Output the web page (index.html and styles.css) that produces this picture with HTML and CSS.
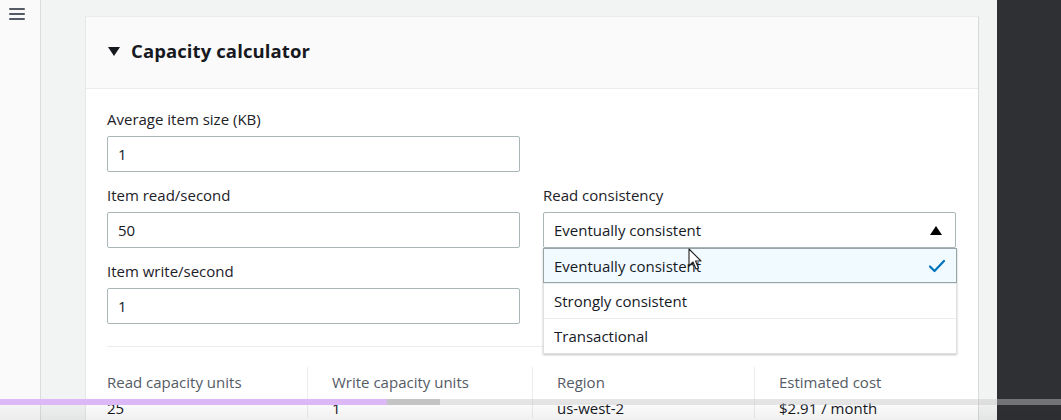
FILE: index.html
```html
<!DOCTYPE html>
<html>
<head>
<meta charset="utf-8">
<link rel="stylesheet" href="styles.css">
</head>
<body>
<div class="app">
  <aside class="sidebar">
    <svg class="burger" width="16" height="14" viewBox="0 0 16 14"><rect x="0" y="1" width="16" height="2" rx="1"/><rect x="0" y="6" width="16" height="2" rx="1"/><rect x="0" y="11" width="16" height="2" rx="1"/></svg>
  </aside>
  <main class="main">
    <section class="card">
      <header class="card-head">
        <span class="caret-down"></span>
        <h2 class="title">Capacity calculator</h2>
      </header>
      <div class="card-body">
        <div class="form">
          <div class="field f-size">
            <label class="label">Average item size (KB)</label>
            <div class="input">1</div>
          </div>
          <div class="field f-read">
            <label class="label">Item read/second</label>
            <div class="input">50</div>
          </div>
          <div class="field f-cons">
            <label class="label">Read consistency</label>
            <div class="select-wrap">
              <div class="input select">
                <span>Eventually consistent</span>
                <span class="caret-up"></span>
              </div>
              <ul class="menu">
                <li class="opt selected"><span>Eventually consistent</span>
                  <svg class="check" width="18" height="14" viewBox="0 0 18 14"><path d="M2 7.5 L6.5 12 L16 2" fill="none" stroke="#0073bb" stroke-width="2.2" stroke-linecap="round" stroke-linejoin="round"/></svg>
                </li>
                <li class="opt">Strongly consistent</li>
                <li class="opt">Transactional</li>
              </ul>
              <svg class="cursor" width="16" height="24" viewBox="0 0 16 24"><path d="M1 1 L1 18 L5 14 L8 21 L10.5 20 L7.5 13 L13 13 Z" fill="#fff" stroke="#222" stroke-width="1.1" stroke-linejoin="round"/></svg>
            </div>
          </div>
          <div class="field f-write">
            <label class="label">Item write/second</label>
            <div class="input">1</div>
          </div>
        </div>
        <div class="divider"></div>
        <div class="stats">
          <div class="stat"><div class="s-label">Read capacity units</div><div class="s-value">25</div></div>
          <div class="stat bordered"><div class="s-label">Write capacity units</div><div class="s-value">1</div></div>
          <div class="stat bordered"><div class="s-label">Region</div><div class="s-value">us-west-2</div></div>
          <div class="stat bordered"><div class="s-label">Estimated cost</div><div class="s-value">$2.91 / month</div></div>
        </div>
      </div>
    </section>
  </main>
  <div class="dark"></div>
</div>
<div class="video-shade"></div>
<div class="progress">
  <div class="played"></div>
  <div class="buffered"></div>
</div>
</body>
</html>
```

FILE: styles.css
```css
* { box-sizing: border-box; }
html, body { margin: 0; padding: 0; }
body {
  width: 1061px;
  height: 420px;
  overflow: hidden;
  font-family: "Open Sans", "Noto Sans", "Liberation Sans", sans-serif;
  color: #16191f;
  background: #f2f3f3;
  position: relative;
}
.app {
  display: flex;
  height: 420px;
}
.sidebar {
  width: 41px;
  flex: none;
  background: #fafafa;
  border-right: 1px solid #dcdcdc;
  padding: 7px 0 0 9px;
}
.burger { display: block; fill: #545b64; }
.main {
  flex: 1;
  background: #f2f3f3;
  padding: 16px 19px 0 44px;
  min-width: 0;
}
.dark {
  width: 64px;
  flex: none;
  background: #2f3033;
}
.card {
  width: 894px;
  height: 420px;
  background: #fff;
  border-left: 1px solid #e6e6e6;
  border-right: 1px solid #d9d9d9;
  border-top: 1px solid #ececec;
}
.card-head {
  height: 72px;
  background: #fafafa;
  border-bottom: 1px solid #eaeded;
  display: flex;
  align-items: center;
  padding-left: 22px;
  padding-bottom: 4px;
  gap: 11px;
}
.caret-down {
  width: 0; height: 0;
  border-left: 6px solid transparent;
  border-right: 6px solid transparent;
  border-top: 9px solid #16191f;
  margin-top: 1px;
}
.title {
  margin: 0;
  font-size: 18.5px;
  font-weight: 700;
  letter-spacing: 0.1px;
  color: #16191f;
}
.card-body {
  padding: 20px 22px 0 21px;
}
.form {
  display: grid;
  grid-template-columns: 413px 413px;
  column-gap: 23px;
  row-gap: 13px;
  grid-template-areas:
    "size ."
    "read cons"
    "write .";
}
.f-size { grid-area: size; }
.f-read { grid-area: read; }
.f-cons { grid-area: cons; }
.f-write { grid-area: write; }
.field { display: flex; flex-direction: column; gap: 7px; }
.label {
  font-size: 15px;
  line-height: 20px;
  color: #1d2128;
}
.input {
  height: 36px;
  border: 1px solid #aab7b8;
  border-radius: 2px;
  padding: 0 10px;
  display: flex;
  align-items: center;
  font-size: 15px;
  color: #16191f;
  background: #fff;
}
.select-wrap { position: relative; }
.select { justify-content: space-between; padding-right: 13px; }
.caret-up {
  width: 0; height: 0;
  border-left: 6px solid transparent;
  border-right: 6px solid transparent;
  border-bottom: 9px solid #000;
}
.menu {
  position: absolute;
  left: 0;
  top: 36px;
  width: 414px;
  margin: 0;
  padding: 0;
  list-style: none;
  background: #fff;
  border: 1px solid #e0e0e0;
  border-top: none;
  box-shadow: 0 1px 2px rgba(0,0,0,0.25);
  z-index: 2;
}
.opt {
  height: 35px;
  display: flex;
  align-items: center;
  justify-content: space-between;
  padding: 0 10px;
  font-size: 15px;
  color: #16191f;
  border-top: 1px solid #eaeded;
}
.opt:first-child { border-top: none; }
.opt.selected {
  background: #f1faff;
  border: 1px solid #98a4a6;
  margin: 0 -1px;
  padding-right: 10px;
}
.check { display: block; }
.cursor {
  position: absolute;
  left: 145px;
  top: 36px;
  z-index: 3;
}
.divider {
  height: 1px;
  background: #eaeded;
  margin-top: 22px;
  width: 848px;
}
.stats {
  display: grid;
  grid-template-columns: 200px 225px 222px 1fr;
  width: 848px;
  margin-top: 20px;
}
.stat { padding-top: 5px; }
.stat.bordered { border-left: 1px solid #eaeded; padding-left: 24px; }
.s-label {
  font-size: 15px;
  line-height: 20px;
  color: #545b64;
}
.s-value {
  font-size: 15px;
  line-height: 20px;
  margin-top: 6px;
  color: #16191f;
}
.video-shade {
  position: absolute;
  left: 0; right: 0; bottom: 0;
  height: 22px;
  background: linear-gradient(to bottom, rgba(0,0,0,0), rgba(0,0,0,0.06));
  pointer-events: none;
}
.progress {
  position: absolute;
  left: 0; right: 0;
  top: 399px;
  height: 6px;
  background: rgba(200,200,200,0.45);
  display: flex;
}
.played { width: 387px; background: #ddb8f7; }
.buffered { width: 53px; background: #c4c4c4; }
```
